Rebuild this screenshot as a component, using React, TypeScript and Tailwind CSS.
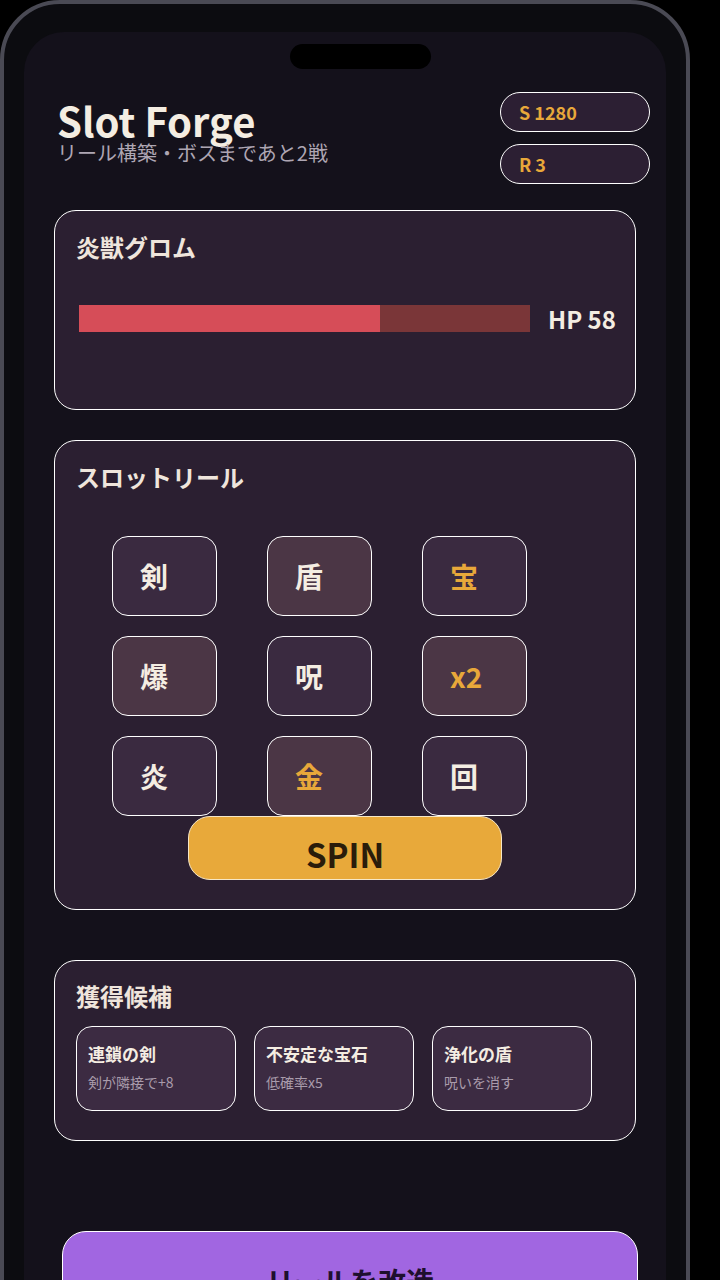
import React from "react";

const cells: { t: string; warm: boolean; gold: boolean }[] = [
  { t: "剣", warm: false, gold: false },
  { t: "盾", warm: true, gold: false },
  { t: "宝", warm: false, gold: true },
  { t: "爆", warm: true, gold: false },
  { t: "呪", warm: false, gold: false },
  { t: "x2", warm: true, gold: true },
  { t: "炎", warm: false, gold: false },
  { t: "金", warm: true, gold: true },
  { t: "回", warm: false, gold: false },
];

const cands = [
  { t: "連鎖の剣", d: "剣が隣接で+8" },
  { t: "不安定な宝石", d: "低確率x5" },
  { t: "浄化の盾", d: "呪いを消す" },
];

export default function App() {
  return (
    <div
      className="w-[720px] h-[1280px] bg-black overflow-hidden"
      style={{ fontFamily: '"Noto Sans CJK JP", "Noto Sans", sans-serif' }}
    >
      <div className="w-[690px] min-h-[1400px] rounded-[60px] border-4 border-[#4a4a54] bg-[#0c0c10] pt-[28px] px-[20px]">
        <div className="rounded-[40px] bg-[#14111b] min-h-[1320px] pt-[12px] flex flex-col">
          <div className="ml-[266px] w-[141px] h-[25px] rounded-full bg-black" />
          <div className="mt-[23px] flex justify-between items-start pl-[33px] pr-[16px]">
            <div className="pt-[8px]">
              <div className="text-[40px] leading-[40px] font-bold text-[#f4ede2]">
                Slot Forge
              </div>
              <div className="mt-[2px] text-[20px] leading-[22px] text-[#aea6b3]">
                リール構築・ボスまであと2戦
              </div>
            </div>
            <div className="flex flex-col gap-[12px]">
              <div className="w-[150px] h-[40px] rounded-full border border-white bg-[#2c1f33] pl-[18px] flex items-center text-[18px] font-bold text-[#e8a83a]">
                S 1280
              </div>
              <div className="w-[150px] h-[40px] rounded-full border border-white bg-[#2c1f33] pl-[18px] flex items-center text-[18px] font-bold text-[#e8a83a]">
                R 3
              </div>
            </div>
          </div>

          <div className="px-[30px] mt-[26px] flex flex-col">
            {/* Boss card */}
            <div className="h-[200px] rounded-[22px] border border-white bg-[#2b1f31] px-[21px] pt-[20px]">
              <div className="text-[24px] leading-[32px] font-bold text-[#efe5dc]">炎獣グロム</div>
              <div className="mt-[42px] ml-[3px] h-[27px] flex items-center">
                <div className="w-[451px] shrink-0 h-[27px] bg-[#7a3638] flex">
                  <div className="w-[301px] h-full bg-[#d64d58]" />
                </div>
                <div className="ml-[18px] whitespace-nowrap text-[24px] leading-none font-bold text-[#f4ede2]">HP 58</div>
              </div>
            </div>

            {/* Reel card */}
            <div className="mt-[30px] rounded-[22px] border border-white bg-[#2b1f31] px-[21px] pt-[20px] pb-[29px] flex flex-col">
              <div className="text-[24px] leading-[32px] font-bold text-[#efe5dc]">スロットリール</div>
              <div className="mt-[43px] ml-[36px] grid grid-cols-[105px_105px_105px] gap-x-[50px] gap-y-[20px]">
                {cells.map((c, i) => (
                  <div
                    key={i}
                    className={
                      "h-[80px] rounded-[16px] border-[1.5px] border-white pl-[27px] flex items-center text-[28px] font-bold " +
                      (c.warm ? "bg-[#4b3645] " : "bg-[#3a2a40] ") +
                      (c.gold ? "text-[#e8a83a]" : "text-[#f4ede2]")
                    }
                  >
                    {c.t}
                  </div>
                ))}
              </div>
              <div className="self-center w-[314px] h-[64px] rounded-[22px] bg-[#e8a93a] border border-[#f6e7c6] flex items-center justify-center pt-[12px] text-[33px] leading-none font-bold text-[#2a1c0a]">
                SPIN
              </div>
            </div>

            {/* Candidates card */}
            <div className="mt-[50px] rounded-[22px] border border-white bg-[#2b1f31] px-[21px] pt-[19px] pb-[29px]">
              <div className="text-[24px] leading-[32px] font-bold text-[#efe5dc]">獲得候補</div>
              <div className="mt-[14px] flex gap-[18px]">
                {cands.map((c, i) => (
                  <div
                    key={i}
                    className="w-[160px] h-[85px] rounded-[16px] border border-white bg-[#3c2b42] pl-[11px] pt-[15px]"
                  >
                    <div className="text-[17px] leading-[24px] font-bold text-[#f4ede2]">{c.t}</div>
                    <div className="mt-[6px] text-[14px] leading-[20px] text-[#a99bab]">{c.d}</div>
                  </div>
                ))}
              </div>
            </div>

            <div className="mt-[90px] ml-[8px] w-[576px] h-[100px] rounded-[24px] border border-white bg-[#a166e1] pt-[29px] flex justify-center">
              <div className="text-[28px] leading-[40px] font-bold text-[#1e0f2e]">リールを改造</div>
            </div>
          </div>
        </div>
      </div>
    </div>
  );
}
